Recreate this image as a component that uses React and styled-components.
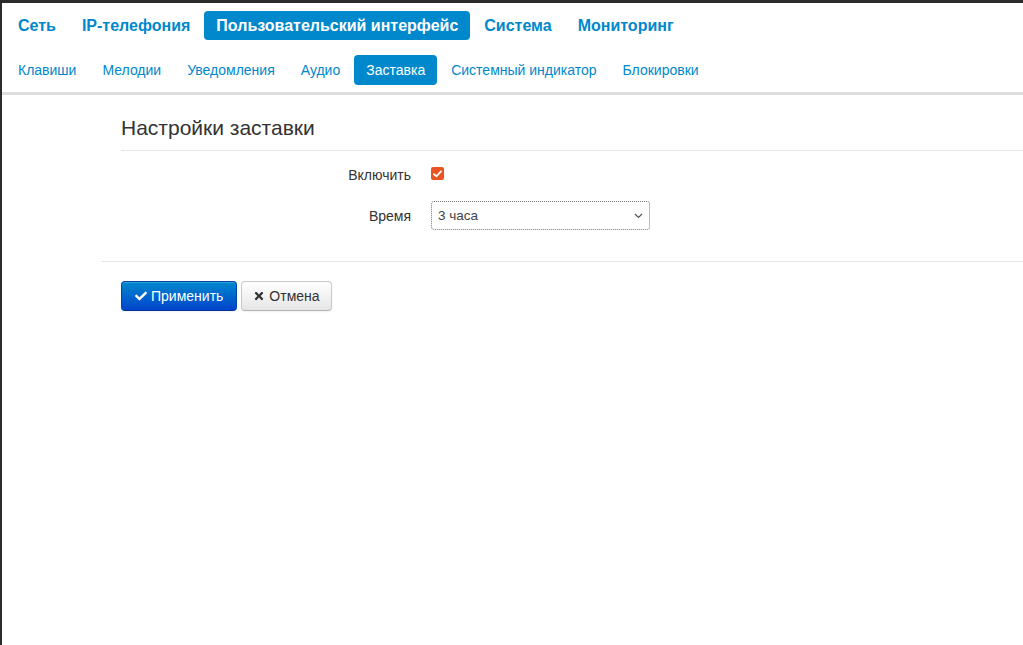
import React from "react";
import styled, { createGlobalStyle } from "styled-components";
import { FaCheck, FaTimes } from "react-icons/fa";

const Global = createGlobalStyle`
  html, body { margin: 0; padding: 0; background: #2b2b2b; }
  body { font-family: "Liberation Sans", Arial, sans-serif; color: #333; }
  #root { min-height: 645px; }
`;

const Frame = styled.div`
  box-sizing: border-box;
  min-height: 645px;
  margin-top: 3px;
  margin-left: 2px;
  background: #fff;
  padding-top: 8px;
`;

const NavBar = styled.ul`
  list-style: none;
  margin: 0;
  padding: 0 0 0 4px;
  display: flex;
  gap: 2px;
`;

const TopItem = styled.li`
  font-weight: bold;
  font-size: 16px;
  line-height: 29px;
  height: 29px;
  padding: 0 12px;
  border-radius: 4px;
  color: ${(p) => (p.$active ? "#fff" : "#0088cc")};
  background: ${(p) => (p.$active ? "#0088cc" : "transparent")};
`;

const SubNav = styled(NavBar)`
  margin-top: 15px;
`;

const SubItem = styled.li`
  font-size: 14px;
  line-height: 30px;
  height: 30px;
  padding: 0 12px;
  border-radius: 4px;
  color: ${(p) => (p.$active ? "#fff" : "#0088cc")};
  background: ${(p) => (p.$active ? "#0088cc" : "transparent")};
`;

const Divider = styled.div`
  height: 3px;
  background: #ddd;
  margin-top: 7px;
`;

const Content = styled.div`
  padding-left: 99px;
`;

const Legend = styled.h2`
  margin: 18px 0 0 20px;
  padding: 0 0 7px;
  font-size: 21px;
  font-weight: normal;
  line-height: 30px;
  color: #333;
  border-bottom: 1px solid #e5e5e5;
`;

const Form = styled.div`
  padding: 14px 0 0 20px;
  display: flex;
  flex-direction: column;
  gap: 16px;
`;

const Row = styled.div`
  display: flex;
  align-items: ${(p) => (p.$start ? "flex-start" : "center")};
  gap: 20px;
  height: ${(p) => p.$h || 20}px;
`;

const Label = styled.label`
  width: 290px;
  text-align: right;
  font-size: 14px;
  line-height: 20px;
  color: #333;
`;

const Check = styled.span`
  width: 13px;
  height: 13px;
  margin-top: 2px;
  border-radius: 2px;
  background: #e95420;
  display: inline-flex;
  align-items: center;
  justify-content: center;
`;

const Select = styled.div`
  box-sizing: border-box;
  width: 219px;
  height: 29px;
  border: 1px dotted #777;
  border-radius: 3px;
  display: flex;
  align-items: center;
  justify-content: space-between;
  padding: 0 6px;
  font-size: 13.5px;
  color: #444;
`;

const Actions = styled.div`
  margin-top: 31px;
  border-top: 1px solid #e5e5e5;
  padding: 19px 0 0 20px;
  display: flex;
  gap: 4px;
`;

const Button = styled.button`
  box-sizing: border-box;
  height: 30px;
  padding: 0 ${(p) => (p.$primary ? 13 : 11)}px;
  font-family: "Liberation Sans", Arial, sans-serif;
  font-size: 14px;
  border-radius: 4px;
  display: inline-flex;
  align-items: center;
  gap: 4px;
  cursor: pointer;
  color: ${(p) => (p.$primary ? "#fff" : "#333")};
  border: 1px solid ${(p) => (p.$primary ? "#0044aa" : "#c8c8c8")};
  border-bottom-color: ${(p) => (p.$primary ? "#003399" : "#b3b3b3")};
  background: ${(p) =>
    p.$primary
      ? "linear-gradient(#0088cc, #0044cc)"
      : "linear-gradient(#ffffff, #e6e6e6)"};
  box-shadow: inset 0 1px 0 rgba(255,255,255,.2), 0 1px 2px rgba(0,0,0,.05);
  svg { font-size: 12px; }
`;

export default function App() {
  const top = ["Сеть", "IP-телефония", "Пользовательский интерфейс", "Система", "Мониторинг"];
  const sub = ["Клавиши", "Мелодии", "Уведомления", "Аудио", "Заставка", "Системный индикатор", "Блокировки"];
  return (
    <>
      <Global />
      <Frame>
        <NavBar>
          {top.map((t) => (
            <TopItem key={t} $active={t === "Пользовательский интерфейс"}>{t}</TopItem>
          ))}
        </NavBar>
        <SubNav>
          {sub.map((t) => (
            <SubItem key={t} $active={t === "Заставка"}>{t}</SubItem>
          ))}
        </SubNav>
        <Divider />
        <Content>
          <Legend>Настройки заставки</Legend>
          <Form>
            <Row $start>
              <Label>Включить</Label>
              <Check>
                <svg width="9" height="8" viewBox="0 0 9 8">
                  <path d="M1 4.2 L3.4 6.4 L8 1.4" fill="none" stroke="#fff" strokeWidth="1.8" strokeLinecap="round" strokeLinejoin="round" />
                </svg>
              </Check>
            </Row>
            <Row $h={29}>
              <Label>Время</Label>
              <Select>
                <span>3 часа</span>
                <svg width="9" height="6" viewBox="0 0 9 6">
                  <path d="M1 1 L4.5 4.5 L8 1" fill="none" stroke="#555" strokeWidth="1.2" />
                </svg>
              </Select>
            </Row>
          </Form>
          <Actions>
            <Button $primary><FaCheck />Применить</Button>
            <Button><FaTimes />Отмена</Button>
          </Actions>
        </Content>
      </Frame>
    </>
  );
}
